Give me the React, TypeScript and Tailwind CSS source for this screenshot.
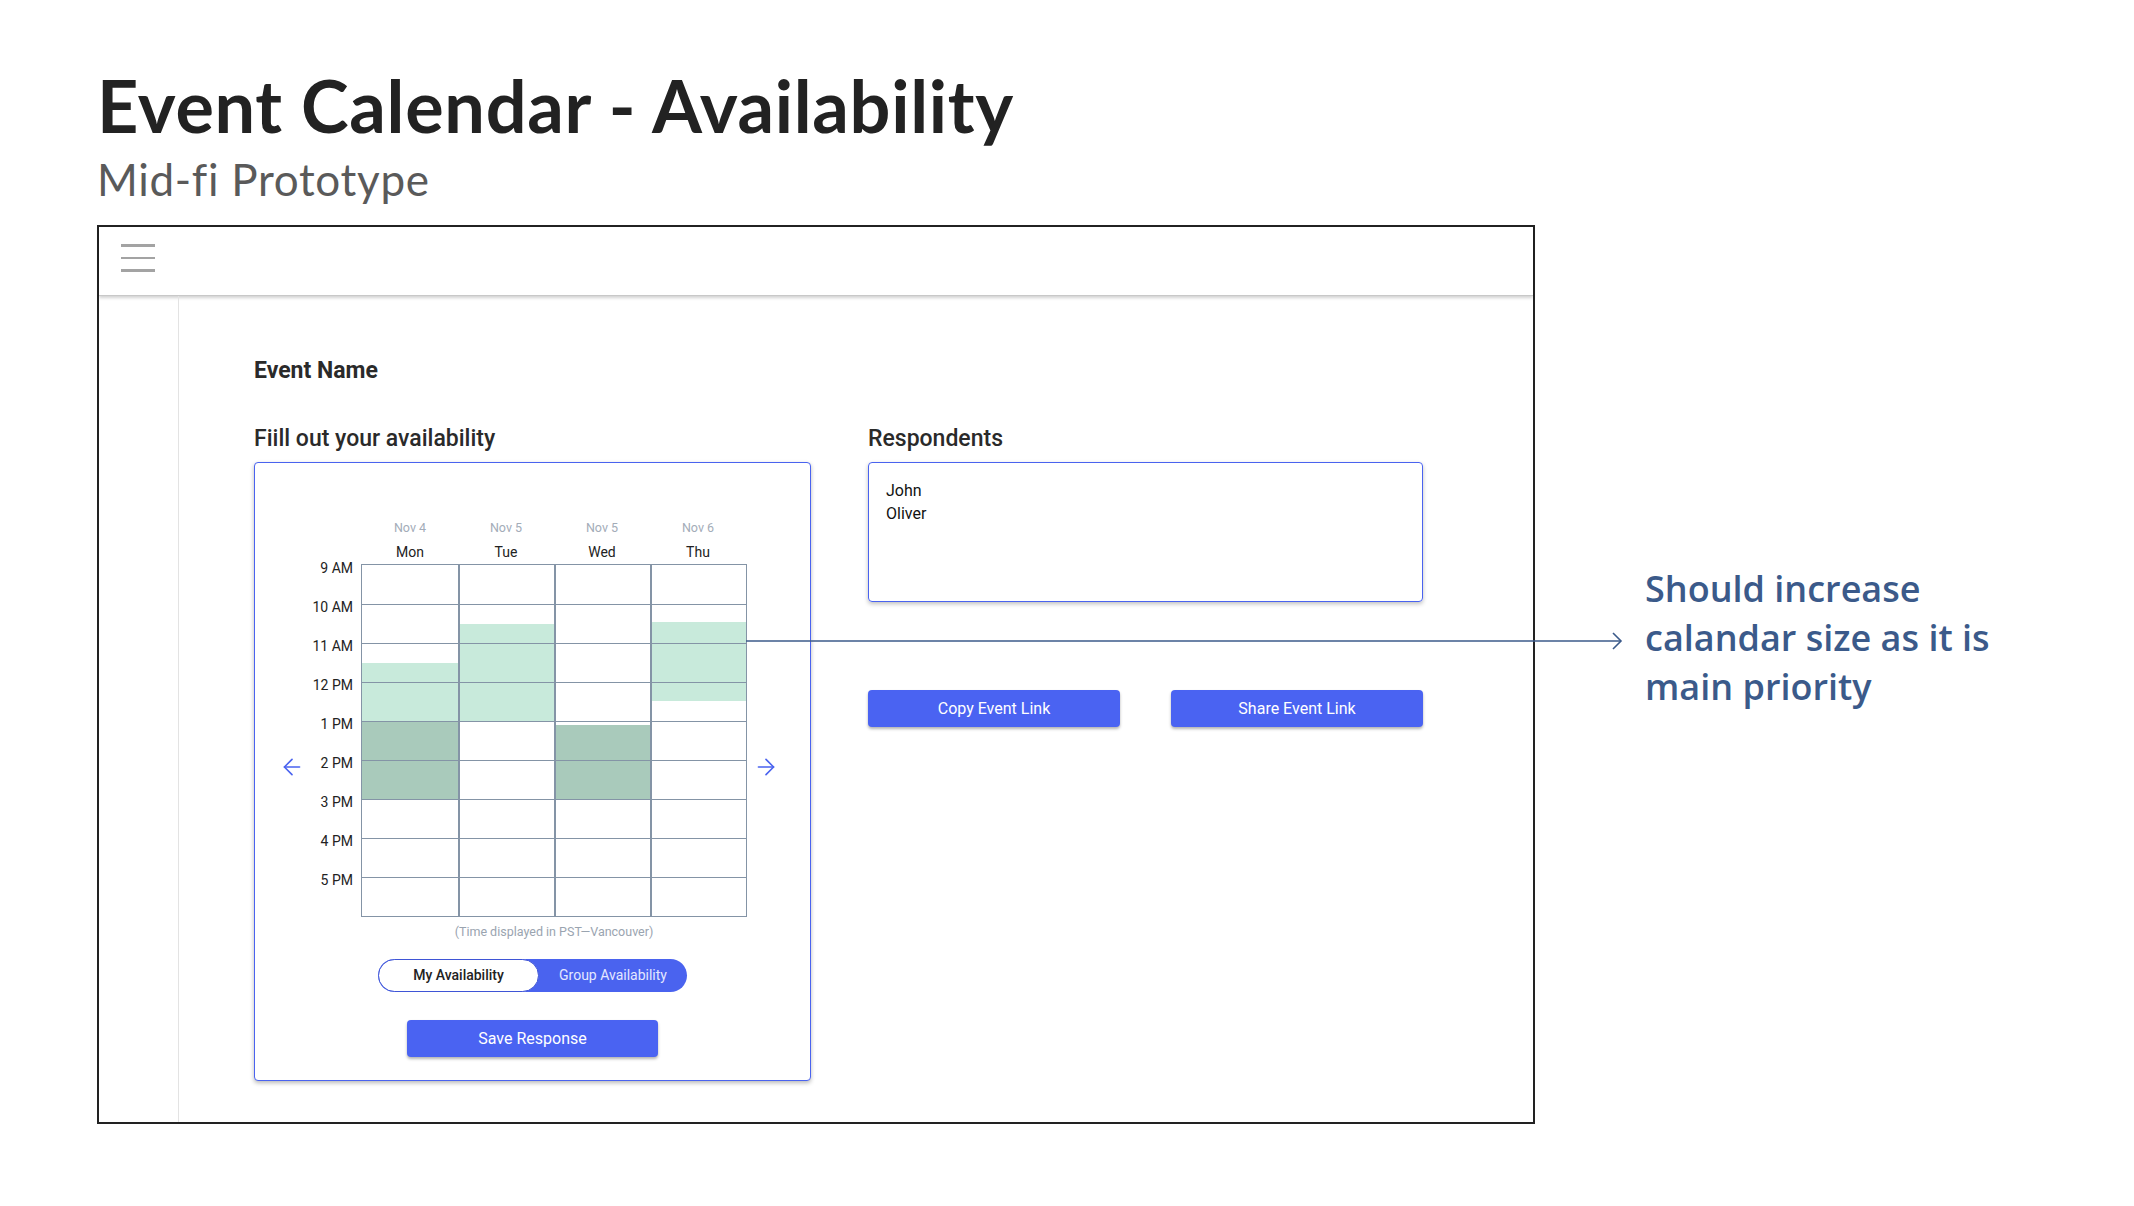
import React from 'react';
import { ArrowLeft, ArrowRight } from 'lucide-react';

type Block = { from: number; to: number; tone: 'light' | 'dark' };

const days: { date: string; name: string; blocks: Block[] }[] = [
  { date: 'Nov 4', name: 'Mon', blocks: [{ from: 2.5, to: 4, tone: 'light' }, { from: 4, to: 6, tone: 'dark' }] },
  { date: 'Nov 5', name: 'Tue', blocks: [{ from: 1.5, to: 4, tone: 'light' }] },
  { date: 'Nov 5', name: 'Wed', blocks: [{ from: 4.1, to: 6, tone: 'dark' }] },
  { date: 'Nov 6', name: 'Thu', blocks: [{ from: 1.45, to: 3.5, tone: 'light' }] },
];

const hours = ['9 AM', '10 AM', '11 AM', '12 PM', '1 PM', '2 PM', '3 PM', '4 PM', '5 PM'];
const ROW = 39;

const ui = { fontFamily: 'Roboto, "Liberation Sans", sans-serif' };

const CalendarCard: React.FC = () => {
  return (
    <div className="w-[557px] h-[619px] border border-[#4a63ef] rounded-[4px] bg-white shadow-[0_2px_4px_rgba(0,0,0,0.28)] flex flex-col">
      <div className="flex pl-[24px] pt-[57px]">
        {/* left arrow */}
        <div className="w-[26px] pt-[234px]">
          <ArrowLeft className="w-[26px] h-[26px] text-[#4a63ef]" strokeWidth={1.5} />
        </div>

        {/* hour labels */}
        <div className="w-[48px] pt-[41px] flex flex-col items-end">
          {hours.map((h) => (
            <div key={h} className="h-[39px] text-[14px] leading-[16px] text-[#222] -mt-[1px] mb-[1px]">
              {h}
            </div>
          ))}
        </div>

        {/* grid */}
        <div className="ml-[8px] flex flex-col items-center">
          <div className="flex px-[1px]">
            {days.map((d, i) => (
              <div key={i} className="w-[96px] flex flex-col items-center">
                <span className="text-[12.5px] leading-[16px] text-[#a3acb8]">{d.date}</span>
                <span className="mt-[7px] text-[14px] leading-[18px] text-[#222]">{d.name}</span>
              </div>
            ))}
          </div>
          <div className="mt-[3px] flex border border-[#8494a6]">
            {days.map((d, i) => (
              <div key={i} className={i === 0 ? 'relative w-[96px]' : 'relative w-[96px] border-l-2 border-[#8494a6]'}>
                {d.blocks.map((b, j) => (
                  <div
                    key={j}
                    className={b.tone === 'light' ? 'absolute left-0 right-0 bg-[#c8eadb]' : 'absolute left-0 right-0 bg-[#a9cabb]'}
                    style={{ top: b.from * ROW, height: (b.to - b.from) * ROW }}
                  />
                ))}
                {hours.map((h, j) => (
                  <div key={h} className={j === 0 ? 'relative h-[39px]' : 'relative h-[39px] border-t border-[#8494a6]'} />
                ))}
              </div>
            ))}
          </div>
          <p className="mt-[7px] text-[12.5px] leading-[16px] text-[#9aa4b0]">(Time displayed in PST—Vancouver)</p>
        </div>

        {/* right arrow */}
        <div className="ml-[6px] w-[26px] pt-[234px]">
          <ArrowRight className="w-[26px] h-[26px] text-[#4a63ef]" strokeWidth={1.5} />
        </div>
      </div>

      <div className="mt-[19px] flex justify-center">
        <div className="w-[309px] h-[33px] rounded-full bg-[#4a63ef] flex items-center">
          <div className="w-[161px] h-[33px] rounded-full bg-white border border-[#3f55d6] flex items-center justify-center text-[14px] font-medium text-[#222]">
            My Availability
          </div>
          <div className="flex-1 text-center text-[14px] text-[#e3e7ff]">Group Availability</div>
        </div>
      </div>

      <div className="mt-[28px] flex justify-center">
        <button className="w-[251px] h-[37px] rounded-[4px] bg-[#4a63f2] text-white text-[16px] shadow-[0_2px_3px_rgba(0,0,0,0.3)]">
          Save Response
        </button>
      </div>
    </div>
  );
};

export default function App() {
  return (
    <div className="relative w-[2134px] h-[1206px] bg-white overflow-hidden">
      <div className="pl-[97px] pt-[68px]">
        <h1
          className="text-[72px] leading-[74px] font-bold text-[#222] tracking-[0.7px]"
          style={{ fontFamily: 'Lato, "Liberation Sans", sans-serif' }}
        >
          Event Calendar - Availability
        </h1>
        <p
          className="mt-[13px] text-[44px] leading-[48px] text-[#5a5a5a] tracking-[0.7px]"
          style={{ fontFamily: 'Lato, "Liberation Sans", sans-serif' }}
        >
          Mid-fi Prototype
        </p>

        <div className="mt-[22px] flex items-start">
          {/* prototype frame */}
          <div className="w-[1438px] h-[899px] border-2 border-[#222] flex flex-col" style={ui}>
            <div className="h-[69px] border-b border-[#c8c8c8] shadow-[0_2px_3px_rgba(0,0,0,0.18)] pl-[22px] pt-[17px]">
              <div className="w-[34px] flex flex-col gap-[10px]">
                <span className="h-[2.5px] bg-[#a3a3a3]" />
                <span className="h-[2.5px] bg-[#a3a3a3]" />
                <span className="h-[2.5px] bg-[#a3a3a3]" />
              </div>
            </div>

            <div className="flex-1 flex">
              <div className="w-[80px] border-r border-[#e3e3e3]" />
              <div className="pl-[75px] pt-[61px]">
                <h2 className="text-[23px] leading-[28px] font-bold text-[#2a2a2a]">Event Name</h2>

                <div className="mt-[40px] flex gap-[57px]">
                  <div>
                    <h3 className="text-[23px] leading-[28px] font-medium text-[#2a2a2a]">Fiill out your availability</h3>
                    <div className="mt-[9px]">
                      <CalendarCard />
                    </div>
                  </div>

                  <div className="w-[555px]">
                    <h3 className="text-[23px] leading-[28px] font-medium text-[#2a2a2a]">Respondents</h3>
                    <div className="mt-[9px] h-[140px] border border-[#4a63ef] rounded-[4px] shadow-[0_2px_4px_rgba(0,0,0,0.25)] pl-[17px] pt-[16px] text-[16px] leading-[23px] text-[#111]">
                      <p>John</p>
                      <p>Oliver</p>
                    </div>
                    <div className="mt-[88px] flex justify-between">
                      <button className="w-[252px] h-[37px] rounded-[4px] bg-[#4a63f2] text-white text-[16px] shadow-[0_2px_3px_rgba(0,0,0,0.3)]">
                        Copy Event Link
                      </button>
                      <button className="w-[252px] h-[37px] rounded-[4px] bg-[#4a63f2] text-white text-[16px] shadow-[0_2px_3px_rgba(0,0,0,0.3)]">
                        Share Event Link
                      </button>
                    </div>
                  </div>
                </div>
              </div>
            </div>
          </div>

          {/* annotation */}
          <p
            className="ml-[110px] mt-[339px] w-[420px] text-[36px] leading-[49px] font-semibold text-[#3b5a8a]"
            style={{ fontFamily: '"Open Sans", "Noto Sans", sans-serif' }}
          >
            Should increase calandar size as it is main priority
          </p>
        </div>
      </div>

      {/* annotation arrow */}
      <svg className="absolute left-0 top-0 pointer-events-none" width="2134" height="1206">
        <line x1="746" y1="641" x2="1621" y2="641" stroke="#3b5a8a" strokeWidth="1.6" />
        <polyline points="1613,633 1621,641 1613,649" fill="none" stroke="#3b5a8a" strokeWidth="1.6" />
      </svg>
    </div>
  );
}
